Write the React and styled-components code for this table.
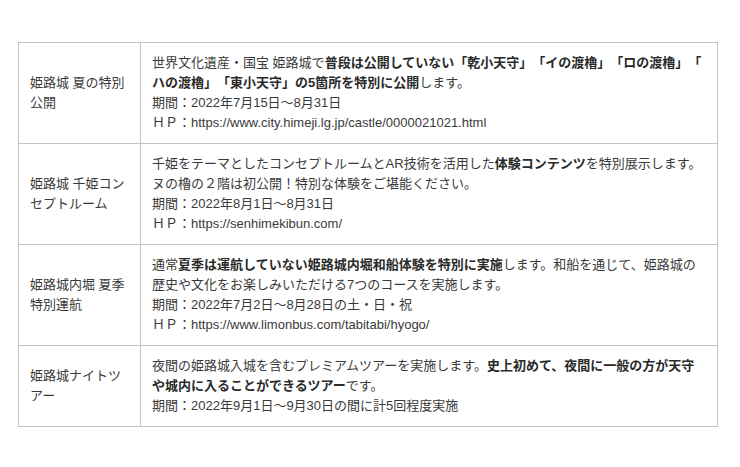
import React from 'react'
import styled, { createGlobalStyle } from 'styled-components'

const GlobalStyle = createGlobalStyle`
  html, body {
    margin: 0;
    padding: 0;
    background: #ffffff;
  }
  body {
    font-family: "Liberation Sans", "Noto Sans CJK JP", sans-serif;
    color: #333333;
  }
`

const Page = styled.div`
  padding: 42px 0 0 18px;
`

const Table = styled.table`
  width: 700px;
  border-collapse: collapse;
  table-layout: fixed;
  font-size: 13px;
  line-height: 20px;
  text-spacing-trim: space-all;
`

const Cell = styled.td`
  border: 1px solid #c4c4c4;
  vertical-align: middle;
  padding: 10px 11px;
  text-align: left;
  color: #3a3a3a;
`

const LabelCell = styled(Cell)`
  width: 99px;
`

const BodyCell = styled(Cell)``

const Line = styled.div`
  white-space: nowrap;
`

const B = styled.strong`
  font-weight: 700;
  color: #2a2a2a;
`

const rows = [
  {
    label: ['姫路城 夏の特別', '公開'],
    lines: [
      <>世界文化遺産・国宝 姫路城で<B>普段は公開していない「乾小天守」「イの渡櫓」「ロの渡櫓」「</B></>,
      <><B>ハの渡櫓」「東小天守」の5箇所を特別に公開</B>します。</>,
      <>期間：2022年7月15日〜8月31日</>,
      <>ＨＰ：https://www.city.himeji.lg.jp/castle/0000021021.html</>,
    ],
  },
  {
    label: ['姫路城 千姫コン', 'セプトルーム'],
    lines: [
      <>千姫をテーマとしたコンセプトルームとAR技術を活用した<B>体験コンテンツ</B>を特別展示します。</>,
      <>ヌの櫓の２階は初公開！特別な体験をご堪能ください。</>,
      <>期間：2022年8月1日〜8月31日</>,
      <>ＨＰ：https://senhimekibun.com/</>,
    ],
  },
  {
    label: ['姫路城内堀 夏季', '特別運航'],
    lines: [
      <>通常<B>夏季は運航していない姫路城内堀和船体験を特別に実施</B>します。和船を通じて、姫路城の</>,
      <>歴史や文化をお楽しみいただける7つのコースを実施します。</>,
      <>期間：2022年7月2日〜8月28日の土・日・祝</>,
      <>ＨＰ：https://www.limonbus.com/tabitabi/hyogo/</>,
    ],
  },
  {
    label: ['姫路城ナイトツ', 'アー'],
    lines: [
      <>夜間の姫路城入城を含むプレミアムツアーを実施します。<B>史上初めて、夜間に一般の方が天守</B></>,
      <><B>や城内に入ることができるツアー</B>です。</>,
      <>期間：2022年9月1日〜9月30日の間に計5回程度実施</>,
    ],
  },
]

const App = () => {
  return (
    <Page>
      <GlobalStyle />
      <Table>
        <tbody>
          {rows.map((row, i) => (
            <tr key={i}>
              <LabelCell>
                {row.label.map((t, j) => (
                  <Line key={j}>{t}</Line>
                ))}
              </LabelCell>
              <BodyCell>
                {row.lines.map((l, j) => (
                  <Line key={j}>{l}</Line>
                ))}
              </BodyCell>
            </tr>
          ))}
        </tbody>
      </Table>
    </Page>
  )
}

export default App
